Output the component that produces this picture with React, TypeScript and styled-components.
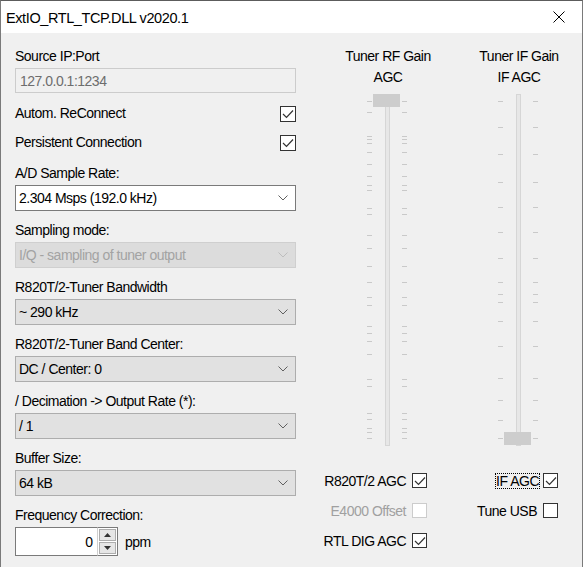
import React from 'react';
import styled, { createGlobalStyle } from 'styled-components';

const Global = createGlobalStyle`
  html, body { margin: 0; padding: 0; background: #ffffff; }
  body { font-family: "Liberation Sans", Arial, sans-serif; font-size: 14px; color: #000; }
`;

const TIGHT = '-0.5px';

const Window = styled.div`
  width: 583px;
  height: 567px;
  box-sizing: border-box;
  display: flex;
  flex-direction: column;
  background: #f0f0f0;
  border-top: 1px solid #5c5c5c;
  border-left: 1px solid #7a7a7a;
  border-right: 1px solid #7a7a7a;
  overflow: hidden;
`;

const TitleBar = styled.div`
  height: 32px;
  flex: none;
  background: #ffffff;
  display: flex;
  align-items: center;
  justify-content: space-between;
  padding-left: 5px;
`;

const Title = styled.div`
  font-size: 14.5px;
  letter-spacing: -0.4px;
  color: #000;
  padding-top: 2px;
`;

const CloseButton = styled.div`
  width: 46px;
  height: 32px;
  display: flex;
  align-items: center;
  justify-content: center;
`;

const Client = styled.div`
  flex: 1;
  display: flex;
  padding: 15px 0 0 14px;
`;

const LeftCol = styled.div`
  width: 281px;
  display: flex;
  flex-direction: column;
`;

const Label = styled.div<{ $disabled?: boolean }>`
  line-height: 17px;
  height: 17px;
  white-space: nowrap;
  letter-spacing: ${TIGHT};
  color: ${p => (p.$disabled ? '#a0a0a0' : '#000')};
`;

const Field = styled.div<{ $mt?: number }>`
  display: flex;
  flex-direction: column;
  gap: 3px;
  margin-top: ${p => p.$mt ?? 11}px;
`;

const TextBox = styled.div`
  height: 25px;
  box-sizing: border-box;
  border: 1px solid #cccccc;
  background: #f0f0f0;
  color: #6d6d6d;
  display: flex;
  align-items: center;
  padding-left: 4px;
  letter-spacing: ${TIGHT};
`;

const CheckRow = styled.div<{ $mt: number }>`
  height: 17px;
  margin-top: ${p => p.$mt}px;
  display: flex;
  align-items: center;
  justify-content: space-between;
`;

const Box = styled.div<{ $size: number; $disabled?: boolean }>`
  width: ${p => p.$size}px;
  height: ${p => p.$size}px;
  box-sizing: border-box;
  border: 1px solid ${p => (p.$disabled ? '#cccccc' : '#333333')};
  background: #ffffff;
  display: flex;
  align-items: center;
  justify-content: center;
  flex: none;
`;

type ComboKind = 'white' | 'normal' | 'disabled';

const ComboBox = styled.div<{ $kind: ComboKind }>`
  height: 26px;
  box-sizing: border-box;
  border: 1px solid ${p => (p.$kind === 'white' ? '#7a7a7a' : p.$kind === 'disabled' ? '#cfcfcf' : '#adadad')};
  background: ${p => (p.$kind === 'white' ? '#ffffff' : p.$kind === 'disabled' ? '#dcdcdc' : '#e1e1e1')};
  color: ${p => (p.$kind === 'disabled' ? '#a3a3a3' : '#000')};
  display: flex;
  align-items: center;
  justify-content: space-between;
  padding: 0 7px 0 3px;
  letter-spacing: ${TIGHT};
  white-space: nowrap;
`;

const SpinRow = styled.div`
  display: flex;
  align-items: center;
`;

const SpinInput = styled.div`
  width: 82px;
  height: 29px;
  box-sizing: border-box;
  border: 1px solid #7a7a7a;
  border-right: none;
  background: #fff;
  display: flex;
  align-items: center;
  justify-content: flex-end;
  padding-right: 4px;
`;

const SpinButtons = styled.div`
  width: 21px;
  height: 29px;
  box-sizing: border-box;
  border: 1px solid #7a7a7a;
  border-left: 1px solid #cfcfcf;
  background: #ffffff;
  display: flex;
  flex-direction: column;
  padding: 1px;
  gap: 1px;
`;

const SpinBtn = styled.div`
  flex: 1;
  box-sizing: border-box;
  border: 1px solid #adadad;
  background: #e6e6e6;
  display: flex;
  align-items: center;
  justify-content: center;
`;

const Unit = styled.div`
  margin-left: 7px;
  letter-spacing: ${TIGHT};
`;

const RightPane = styled.div`
  margin-left: 24px;
  display: grid;
  grid-template-columns: 136px 126px;
  grid-auto-rows: auto;
  align-content: start;
`;

const Header = styled.div`
  margin-top: -2px;
  text-align: center;
  line-height: 21px;
  letter-spacing: ${TIGHT};
`;

const SliderCell = styled.div`
  margin-top: 6px;
  display: flex;
  justify-content: center;
`;

const SliderBody = styled.div`
  position: relative;
  width: 44px;
  height: 352px;
`;

const Thumb = styled.div`
  position: absolute;
  left: 7px;
  width: 27px;
  height: 13px;
  background: #cdcdcd;
`;

const CheckCell = styled.div<{ $mt: number; $pr: number }>`
  margin-top: ${p => p.$mt}px;
  padding-right: ${p => p.$pr}px;
  height: 15px;
  display: flex;
  align-items: center;
  justify-content: flex-end;
  gap: 6px;
`;

const SmallLabel = styled.span<{ $disabled?: boolean }>`
  letter-spacing: ${TIGHT};
  white-space: nowrap;
  color: ${p => (p.$disabled ? '#a0a0a0' : '#000')};
`;

const FocusLabel = styled.span`
  letter-spacing: ${TIGHT};
  white-space: nowrap;
  border: 1px dotted #000;
  line-height: 14px;
  margin-right: -3px;
`;

const Check = () => (
  <svg width="12" height="10" viewBox="0 0 12 10">
    <polyline points="1,5 4.5,8.5 11,1.5" fill="none" stroke="#333" strokeWidth="1.2" />
  </svg>
);

const CheckBox = ({ checked, size = 16, disabled }: { checked?: boolean; size?: number; disabled?: boolean }) => (
  <Box $size={size} $disabled={disabled}>
    {checked && <Check />}
  </Box>
);

const Chevron = ({ color }: { color: string }) => (
  <svg width="10" height="6" viewBox="0 0 10 6">
    <polyline points="0.5,0.5 5,5 9.5,0.5" fill="none" stroke={color} strokeWidth="1" />
  </svg>
);

const Combo = ({ kind, value }: { kind: ComboKind; value: string }) => (
  <ComboBox $kind={kind}>
    <span>{value}</span>
    <Chevron color={kind === 'disabled' ? '#bdbdbd' : '#606060'} />
  </ComboBox>
);

const Slider = ({ ticks, thumbTop }: { ticks: number[]; thumbTop: number }) => (
  <SliderBody>
    <svg width="44" height="352" viewBox="0 0 44 352">
      <rect x="19.5" y="0.5" width="4" height="351" fill="#e7e7e7" stroke="#d6d6d6" />
      {ticks.map((t, i) => (
        <g key={i}>
          <line x1="1" x2="6" y1={t + 0.5} y2={t + 0.5} stroke="#c9c9c9" strokeWidth="1" />
          <line x1="36" x2="41" y1={t + 0.5} y2={t + 0.5} stroke="#c9c9c9" strokeWidth="1" />
        </g>
      ))}
    </svg>
    <Thumb style={{ top: thumbTop }} />
  </SliderBody>
);

const rfTicksAbs = [101, 112, 136, 139, 143, 152, 164, 176, 185, 190, 208, 214, 235, 248, 266, 282, 297, 305, 326, 333, 341, 354, 379, 386, 413, 419, 428, 432, 438];
const ifTicksAbs = [101, 127, 154, 182, 207, 232, 258, 282, 294, 302, 321, 346, 378, 400, 420, 438];
const rfTicks = rfTicksAbs.map(t => t - 94);
const ifTicks = ifTicksAbs.map(t => t - 94);

export default function App() {
  return (
    <>
      <Global />
      <Window>
        <TitleBar>
          <Title>ExtIO_RTL_TCP.DLL v2020.1</Title>
          <CloseButton>
            <svg width="12" height="12" viewBox="0 0 12 12">
              <path d="M0.5 0.5 L11.5 11.5 M11.5 0.5 L0.5 11.5" stroke="#000" strokeWidth="1" fill="none" />
            </svg>
          </CloseButton>
        </TitleBar>
        <Client>
          <LeftCol>
            <Field $mt={0}>
              <Label>Source IP:Port</Label>
              <TextBox>127.0.0.1:1234</TextBox>
            </Field>
            <CheckRow $mt={12}>
              <Label>Autom. ReConnect</Label>
              <CheckBox checked />
            </CheckRow>
            <CheckRow $mt={12}>
              <Label>Persistent Connection</Label>
              <CheckBox checked />
            </CheckRow>
            <Field $mt={14}>
              <Label>A/D Sample Rate:</Label>
              <Combo kind="white" value="2.304 Msps (192.0 kHz)" />
            </Field>
            <Field>
              <Label>Sampling mode:</Label>
              <Combo kind="disabled" value="I/Q - sampling of tuner output" />
            </Field>
            <Field>
              <Label>R820T/2-Tuner Bandwidth</Label>
              <Combo kind="normal" value="~ 290 kHz" />
            </Field>
            <Field>
              <Label>R820T/2-Tuner Band Center:</Label>
              <Combo kind="normal" value="DC / Center: 0" />
            </Field>
            <Field>
              <Label>/ Decimation -&gt; Output Rate (*):</Label>
              <Combo kind="normal" value="/ 1" />
            </Field>
            <Field>
              <Label>Buffer Size:</Label>
              <Combo kind="normal" value="64 kB" />
            </Field>
            <Field>
              <Label>Frequency Correction:</Label>
              <SpinRow>
                <SpinInput>0</SpinInput>
                <SpinButtons>
                  <SpinBtn>
                    <svg width="7" height="4" viewBox="0 0 7 4"><polygon points="0,4 3.5,0 7,4" fill="#333" /></svg>
                  </SpinBtn>
                  <SpinBtn>
                    <svg width="7" height="4" viewBox="0 0 7 4"><polygon points="0,0 3.5,4 7,0" fill="#333" /></svg>
                  </SpinBtn>
                </SpinButtons>
                <Unit>ppm</Unit>
              </SpinRow>
            </Field>
          </LeftCol>
          <RightPane>
            <Header>Tuner RF Gain<br />AGC</Header>
            <Header>Tuner IF Gain<br />IF AGC</Header>
            <SliderCell>
              <Slider ticks={rfTicks} thumbTop={0} />
            </SliderCell>
            <SliderCell>
              <Slider ticks={ifTicks} thumbTop={338} />
            </SliderCell>
            <CheckCell $mt={27} $pr={29}>
              <SmallLabel>R820T/2 AGC</SmallLabel>
              <CheckBox checked size={15} />
            </CheckCell>
            <CheckCell $mt={27} $pr={24}>
              <FocusLabel>IF AGC</FocusLabel>
              <CheckBox checked size={15} />
            </CheckCell>
            <CheckCell $mt={15} $pr={29}>
              <SmallLabel $disabled>E4000 Offset</SmallLabel>
              <CheckBox size={15} disabled />
            </CheckCell>
            <CheckCell $mt={15} $pr={24}>
              <SmallLabel>Tune USB</SmallLabel>
              <CheckBox size={15} />
            </CheckCell>
            <CheckCell $mt={15} $pr={29}>
              <SmallLabel>RTL DIG AGC</SmallLabel>
              <CheckBox checked size={15} />
            </CheckCell>
          </RightPane>
        </Client>
      </Window>
    </>
  );
}
